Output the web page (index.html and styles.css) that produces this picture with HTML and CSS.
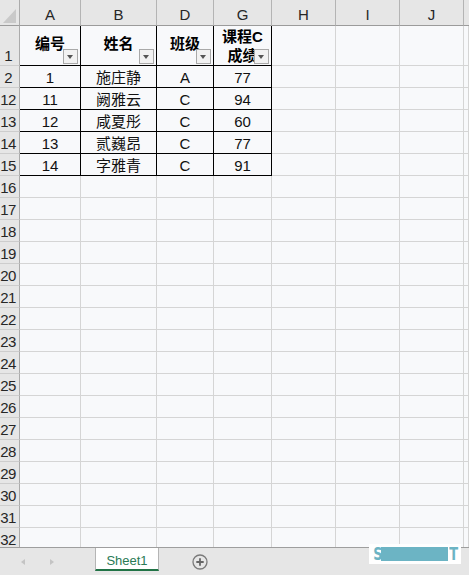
FILE: index.html
```html
<!DOCTYPE html>
<html lang="zh">
<head>
<meta charset="utf-8">
<title>Sheet1</title>
<link rel="stylesheet" href="styles.css">
</head>
<body>
<div class="sheet">
  <div class="grid">
    <div class="row hdr">
      <div class="corner"><svg width="19" height="25" viewBox="0 0 19 25"><polygon points="3,23 16,9 16,23" fill="#c9c9c9"/></svg></div>
      <div class="ch">A</div>
      <div class="ch">B</div>
      <div class="ch">D</div>
      <div class="ch">G</div>
      <div class="ch">H</div>
      <div class="ch">I</div>
      <div class="ch">J</div>
      <div class="ch last"></div>
    </div>
    <div class="row r1">
      <div class="rh">1</div>
      <div class="c t th">编号<span class="fb"></span></div>
      <div class="c t th">姓名<span class="fb"></span></div>
      <div class="c t th">班级<span class="fb"></span></div>
      <div class="c t th two">课程C<br>成绩<span class="fb"></span></div>
      <div class="c"></div><div class="c"></div><div class="c"></div><div class="c"></div>
    </div>
    <div class="row">
      <div class="rh">2</div>
      <div class="c t">1</div><div class="c t">施庄静</div><div class="c t">A</div><div class="c t">77</div>
      <div class="c"></div><div class="c"></div><div class="c"></div><div class="c"></div>
    </div>
    <div class="row">
      <div class="rh">12</div>
      <div class="c t">11</div><div class="c t">阙雅云</div><div class="c t">C</div><div class="c t">94</div>
      <div class="c"></div><div class="c"></div><div class="c"></div><div class="c"></div>
    </div>
    <div class="row">
      <div class="rh">13</div>
      <div class="c t">12</div><div class="c t">咸夏彤</div><div class="c t">C</div><div class="c t">60</div>
      <div class="c"></div><div class="c"></div><div class="c"></div><div class="c"></div>
    </div>
    <div class="row">
      <div class="rh">14</div>
      <div class="c t">13</div><div class="c t">贰巍昂</div><div class="c t">C</div><div class="c t">77</div>
      <div class="c"></div><div class="c"></div><div class="c"></div><div class="c"></div>
    </div>
    <div class="row">
      <div class="rh">15</div>
      <div class="c t">14</div><div class="c t">字雅青</div><div class="c t">C</div><div class="c t">91</div>
      <div class="c"></div><div class="c"></div><div class="c"></div><div class="c"></div>
    </div>
    <div class="row"><div class="rh">16</div><div class="c"></div><div class="c"></div><div class="c"></div><div class="c"></div><div class="c"></div><div class="c"></div><div class="c"></div><div class="c"></div></div>
    <div class="row"><div class="rh">17</div><div class="c"></div><div class="c"></div><div class="c"></div><div class="c"></div><div class="c"></div><div class="c"></div><div class="c"></div><div class="c"></div></div>
    <div class="row"><div class="rh">18</div><div class="c"></div><div class="c"></div><div class="c"></div><div class="c"></div><div class="c"></div><div class="c"></div><div class="c"></div><div class="c"></div></div>
    <div class="row"><div class="rh">19</div><div class="c"></div><div class="c"></div><div class="c"></div><div class="c"></div><div class="c"></div><div class="c"></div><div class="c"></div><div class="c"></div></div>
    <div class="row"><div class="rh">20</div><div class="c"></div><div class="c"></div><div class="c"></div><div class="c"></div><div class="c"></div><div class="c"></div><div class="c"></div><div class="c"></div></div>
    <div class="row"><div class="rh">21</div><div class="c"></div><div class="c"></div><div class="c"></div><div class="c"></div><div class="c"></div><div class="c"></div><div class="c"></div><div class="c"></div></div>
    <div class="row"><div class="rh">22</div><div class="c"></div><div class="c"></div><div class="c"></div><div class="c"></div><div class="c"></div><div class="c"></div><div class="c"></div><div class="c"></div></div>
    <div class="row"><div class="rh">23</div><div class="c"></div><div class="c"></div><div class="c"></div><div class="c"></div><div class="c"></div><div class="c"></div><div class="c"></div><div class="c"></div></div>
    <div class="row"><div class="rh">24</div><div class="c"></div><div class="c"></div><div class="c"></div><div class="c"></div><div class="c"></div><div class="c"></div><div class="c"></div><div class="c"></div></div>
    <div class="row"><div class="rh">25</div><div class="c"></div><div class="c"></div><div class="c"></div><div class="c"></div><div class="c"></div><div class="c"></div><div class="c"></div><div class="c"></div></div>
    <div class="row"><div class="rh">26</div><div class="c"></div><div class="c"></div><div class="c"></div><div class="c"></div><div class="c"></div><div class="c"></div><div class="c"></div><div class="c"></div></div>
    <div class="row"><div class="rh">27</div><div class="c"></div><div class="c"></div><div class="c"></div><div class="c"></div><div class="c"></div><div class="c"></div><div class="c"></div><div class="c"></div></div>
    <div class="row"><div class="rh">28</div><div class="c"></div><div class="c"></div><div class="c"></div><div class="c"></div><div class="c"></div><div class="c"></div><div class="c"></div><div class="c"></div></div>
    <div class="row"><div class="rh">29</div><div class="c"></div><div class="c"></div><div class="c"></div><div class="c"></div><div class="c"></div><div class="c"></div><div class="c"></div><div class="c"></div></div>
    <div class="row"><div class="rh">30</div><div class="c"></div><div class="c"></div><div class="c"></div><div class="c"></div><div class="c"></div><div class="c"></div><div class="c"></div><div class="c"></div></div>
    <div class="row"><div class="rh">31</div><div class="c"></div><div class="c"></div><div class="c"></div><div class="c"></div><div class="c"></div><div class="c"></div><div class="c"></div><div class="c"></div></div>
    <div class="row"><div class="rh">32</div><div class="c"></div><div class="c"></div><div class="c"></div><div class="c"></div><div class="c"></div><div class="c"></div><div class="c"></div><div class="c"></div></div>
  </div>
  <div class="tabbar">
    <div class="nav"><span class="arr left"></span><span class="arr right"></span></div>
    <div class="tab">Sheet1</div>
    <div class="add"><svg width="16" height="16" viewBox="0 0 16 16"><circle cx="8" cy="8" r="7" fill="none" stroke="#7a7a7a" stroke-width="1.3"/><path d="M8 4.3V11.7M4.3 8H11.7" stroke="#666" stroke-width="1.8"/></svg></div>
  </div>
  <div class="wm"><span class="wm-l">S</span><span class="wm-bar"></span><span class="wm-l">T</span></div>
</div>
</body>
</html>
```

FILE: styles.css
```css
html, body {
  margin: 0;
  padding: 0;
  background: #f8f9fb;
}

.sheet {
  position: relative;
  width: 469px;
  height: 575px;
  overflow: hidden;
  font-family: "Liberation Sans", "Noto Sans CJK SC", sans-serif;
  color: #1a1a1a;
}

.grid {
  height: 547px;
  overflow: hidden;
}

.row {
  display: grid;
  grid-template-columns: 20px 61px 76px 57px 58px 64px 64px 64px 1fr;
  height: 22px;
}

.row.hdr { height: 26px; }
.row.r1 { height: 40px; }

.row > div {
  box-sizing: border-box;
  display: flex;
  align-items: flex-end;
  justify-content: center;
  font-size: 15px;
  line-height: 18px;
  overflow: hidden;
  white-space: nowrap;
}

.corner {
  background: #e6e6e6;
  border-right: 1px solid #ababab;
  border-bottom: 1px solid #9b9b9b;
  align-items: stretch !important;
}

.corner svg { display: block; }

.ch {
  background: #e6e6e6;
  border-right: 1px solid #b4b4b4;
  border-bottom: 1px solid #9b9b9b;
  color: #262626;
  padding-bottom: 1px;
}

.ch.last { border-right: none; }

.rh {
  background: #e6e6e6;
  border-right: 1px solid #ababab;
  border-bottom: 1px solid #cdcdcd;
  color: #262626;
  padding-right: 3px;
  letter-spacing: -0.6px;
}

.c {
  background: #f8f9fb;
  border-right: 1px solid #d5d5d5;
  border-bottom: 1px solid #d5d5d5;
  color: #111;
}

.c.t {
  border-right-color: #000;
  border-bottom-color: #000;
}

.c.th {
  position: relative;
  align-items: center;
  font-weight: bold;
  padding-bottom: 3px;
  color: #000;
}

.c.th.two {
  line-height: 19px;
  padding-bottom: 0;
  white-space: normal;
  text-align: center;
}

.fb {
  position: absolute;
  right: 2px;
  bottom: 1px;
  width: 15px;
  height: 15px;
  box-sizing: border-box;
  background: #f2f2f2;
  border: 1px solid #a9a9a9;
}

.fb::after {
  content: "";
  position: absolute;
  left: 3px;
  top: 5px;
  border-left: 3.5px solid transparent;
  border-right: 3.5px solid transparent;
  border-top: 4px solid #555;
}

.tabbar {
  box-sizing: border-box;
  height: 28px;
  background: #e6e6e6;
  border-top: 1px solid #9e9e9e;
  display: flex;
  align-items: flex-start;
}

.nav {
  flex: none;
  width: 95px;
  height: 27px;
  box-sizing: border-box;
  padding-left: 21px;
  display: flex;
  align-items: center;
  gap: 25px;
}

.arr {
  display: block;
  width: 0;
  height: 0;
  border-top: 3px solid transparent;
  border-bottom: 3px solid transparent;
}

.arr.left { border-right: 4px solid #c4c4c4; }
.arr.right { border-left: 4px solid #c4c4c4; }

.tab {
  flex: none;
  box-sizing: border-box;
  width: 64px;
  height: 23px;
  background: #ffffff;
  border-left: 1px solid #b5b5b5;
  border-right: 1px solid #b5b5b5;
  border-bottom: 2px solid #217346;
  color: #2a7a55;
  font-size: 13px;
  line-height: 16px;
  display: flex;
  align-items: flex-end;
  justify-content: center;
}

.add {
  flex: none;
  margin-left: 33px;
  height: 27px;
  display: flex;
  align-items: center;
}

.add svg { display: block; }

.wm {
  position: absolute;
  left: 369px;
  top: 544px;
  width: 92px;
  height: 20px;
  box-sizing: border-box;
  background: #ffffff;
  padding-left: 3px;
  display: flex;
  align-items: center;
  color: #6cb4c4;
  font-family: "DejaVu Sans", sans-serif;
  font-weight: bold;
  font-size: 18px;
  line-height: 14px;
}

.wm-l {
  display: block;
  width: 9px;
  text-align: center;
  transform: scaleX(0.72);
}

.wm-bar {
  display: block;
  width: 67px;
  height: 14px;
  background: #6cb4c4;
}
```
